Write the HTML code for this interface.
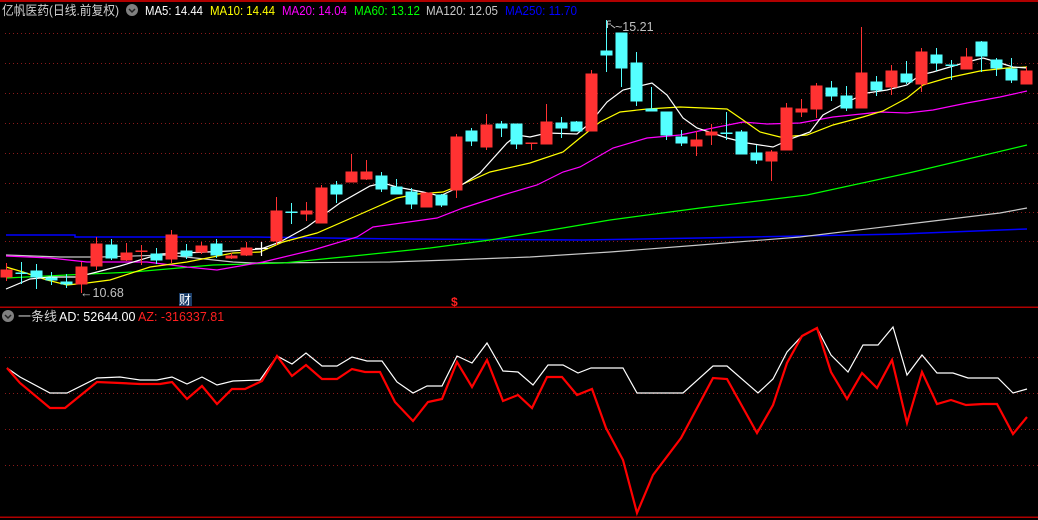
<!DOCTYPE html>
<html><head><meta charset="utf-8"><style>
html,body{margin:0;padding:0;background:#000;width:1038px;height:520px;overflow:hidden}
svg{display:block}
text{font-family:"Liberation Sans","Noto Sans CJK SC",sans-serif;font-size:12.5px}
</style></head><body>
<svg width="1038" height="520" viewBox="0 0 1038 520" xmlns="http://www.w3.org/2000/svg">
<rect width="1038" height="520" fill="#000"/>
<rect x="0" y="0" width="1038" height="2" fill="#b00000"/>
<g stroke="#8a1a1a" stroke-width="1" stroke-dasharray="1,3">
<line x1="5" y1="33.5" x2="1038" y2="33.5"/><line x1="5" y1="63.5" x2="1038" y2="63.5"/>
<line x1="5" y1="93.5" x2="1038" y2="93.5"/><line x1="5" y1="123.5" x2="1038" y2="123.5"/>
<line x1="5" y1="153.5" x2="1038" y2="153.5"/><line x1="5" y1="183.5" x2="1038" y2="183.5"/>
<line x1="5" y1="212.5" x2="1038" y2="212.5"/><line x1="5" y1="241.5" x2="1038" y2="241.5"/>
<line x1="5" y1="357.5" x2="1038" y2="357.5"/><line x1="5" y1="393.5" x2="1038" y2="393.5"/>
<line x1="5" y1="429.5" x2="1038" y2="429.5"/><line x1="5" y1="465.5" x2="1038" y2="465.5"/>
</g>
<rect x="0" y="306.5" width="1038" height="1.5" fill="#b00000"/>
<rect x="0" y="516.5" width="1038" height="1.5" fill="#b00000"/>

<g fill="none" stroke-width="1.2">
<polyline stroke="#0000ff" stroke-width="1.5" points="6,235 75,235 75,237 250,237 405,239 583,240 700,238 900,234 1027,229"/>
<polyline stroke="#c8c8c8" points="6,255 60,257 100,257 167,255 233,262 253,263 390,262 450,260 530,257 610,252 700,245 800,237 900,225 1000,213 1027,208"/>
<polyline stroke="#00ff00" points="6,278 67,275 133,272 213,265 283,263 363,255 430,248 490,240 563,228 610,220 700,208 807,195 913,172 1027,145"/>
<polyline stroke="#ff00ff" points="6,256 50,258 87,262 147,262 187,267 217,270 263,262 313,250 357,237 373,227 437,218 463,208 503,195 537,185 563,172 580,167 613,148 647,138 680,135 713,128 743,122 767,124 800,123 833,117 880,112 907,113 933,110 967,103 1000,97 1027,91"/>
<polyline stroke="#ffff00" points="6,267 23,272 47,280 67,285 87,283 110,280 150,267 187,262 233,253 260,252 283,242 317,233 363,213 397,198 417,194 443,192 463,184 490,172 530,163 563,152 580,138 600,122 620,112 647,109 680,107 727,109 743,120 760,132 780,137 807,135 833,125 863,117 883,111 907,98 923,85 947,78 980,71 1007,68 1027,67"/>
<polyline stroke="#ffffff" points="6,289 30,279 50,277 77,277 97,272 120,266 160,254 207,252 230,251 261,249 280,242 307,227 340,203 370,186 383,183 397,187 423,192 440,196 457,188 480,173 507,143 517,135 530,137 547,133 577,134 590,123 607,102 623,90 652,83 667,95 683,118 697,128 727,138 747,143 773,147 793,138 810,132 823,115 847,102 867,93 887,90 907,85 920,75 933,72 950,67 967,62 983,58 997,62 1013,67 1027,68"/>
</g>

<g stroke="#ff3232" fill="#ff3232" stroke-width="1">
<line x1="6.5" y1="263" x2="6.5" y2="281"/><rect x="1" y="270" width="11" height="7"/>
<line x1="81.5" y1="262" x2="81.5" y2="293"/><rect x="76" y="267" width="11" height="17"/>
<line x1="96.5" y1="237" x2="96.5" y2="270"/><rect x="91" y="244" width="11" height="22"/>
<line x1="126.5" y1="243" x2="126.5" y2="261"/><rect x="121" y="253" width="11" height="7"/>
<line x1="141.5" y1="245" x2="141.5" y2="265"/><rect x="136" y="251" width="11" height="0.5"/>
<line x1="171.5" y1="230" x2="171.5" y2="263"/><rect x="166" y="235" width="11" height="24"/>
<line x1="201.5" y1="242" x2="201.5" y2="254"/><rect x="196" y="246" width="11" height="6"/>
<line x1="231.5" y1="253" x2="231.5" y2="259"/><rect x="226" y="256" width="11" height="2"/>
<line x1="246.5" y1="242" x2="246.5" y2="256"/><rect x="241" y="248" width="11" height="7"/>
<line x1="276.5" y1="197" x2="276.5" y2="245"/><rect x="271" y="211" width="11" height="30"/>
<line x1="306.5" y1="202" x2="306.5" y2="221"/><rect x="301" y="211" width="11" height="3"/>
<line x1="321.5" y1="185" x2="321.5" y2="223"/><rect x="316" y="188" width="11" height="35"/>
<line x1="351.5" y1="154" x2="351.5" y2="182"/><rect x="346" y="172" width="11" height="10"/>
<line x1="366.5" y1="160" x2="366.5" y2="180"/><rect x="361" y="172" width="11" height="7"/>
<line x1="426.5" y1="192" x2="426.5" y2="207"/><rect x="421" y="193" width="11" height="14"/>
<line x1="456.5" y1="134" x2="456.5" y2="198"/><rect x="451" y="137" width="11" height="53"/>
<line x1="486.5" y1="114" x2="486.5" y2="150"/><rect x="481" y="125" width="11" height="22"/>
<line x1="531.5" y1="143" x2="531.5" y2="150"/><rect x="526" y="143" width="11" height="0.5"/>
<line x1="546.5" y1="104" x2="546.5" y2="144"/><rect x="541" y="122" width="11" height="22"/>
<line x1="591.5" y1="70" x2="591.5" y2="131"/><rect x="586" y="74" width="11" height="57"/>
<line x1="696.5" y1="131" x2="696.5" y2="156"/><rect x="691" y="140" width="11" height="6"/>
<line x1="711.5" y1="124" x2="711.5" y2="145"/><rect x="706" y="132" width="11" height="3"/>
<line x1="771.5" y1="150" x2="771.5" y2="181"/><rect x="766" y="152" width="11" height="9"/>
<line x1="786.5" y1="103" x2="786.5" y2="150"/><rect x="781" y="108" width="11" height="42"/>
<line x1="801.5" y1="99" x2="801.5" y2="117"/><rect x="796" y="109" width="11" height="3"/>
<line x1="816.5" y1="83" x2="816.5" y2="118"/><rect x="811" y="86" width="11" height="23"/>
<line x1="861.5" y1="27" x2="861.5" y2="108"/><rect x="856" y="73" width="11" height="35"/>
<line x1="891.5" y1="65" x2="891.5" y2="95"/><rect x="886" y="71" width="11" height="16"/>
<line x1="921.5" y1="48" x2="921.5" y2="92"/><rect x="916" y="52" width="11" height="32"/>
<line x1="966.5" y1="48" x2="966.5" y2="69"/><rect x="961" y="57" width="11" height="12"/>
<line x1="1026.5" y1="67" x2="1026.5" y2="84"/><rect x="1021" y="71" width="11" height="13"/>
</g>
<g stroke="#54ffff" fill="#54ffff" stroke-width="1">
<line x1="21.5" y1="262" x2="21.5" y2="284"/><rect x="16" y="273" width="11" height="0.5"/>
<line x1="36.5" y1="264" x2="36.5" y2="289"/><rect x="31" y="271" width="11" height="6"/>
<line x1="51.5" y1="272" x2="51.5" y2="285"/><rect x="46" y="278" width="11" height="2"/>
<line x1="66.5" y1="274" x2="66.5" y2="288"/><rect x="61" y="282" width="11" height="2"/>
<line x1="111.5" y1="239" x2="111.5" y2="260"/><rect x="106" y="245" width="11" height="13"/>
<line x1="156.5" y1="248" x2="156.5" y2="264"/><rect x="151" y="254" width="11" height="6"/>
<line x1="186.5" y1="244" x2="186.5" y2="259"/><rect x="181" y="251" width="11" height="5"/>
<line x1="216.5" y1="239" x2="216.5" y2="258"/><rect x="211" y="244" width="11" height="11"/>
<line x1="291.5" y1="203" x2="291.5" y2="224"/><rect x="286" y="212" width="11" height="0.5"/>
<line x1="336.5" y1="181" x2="336.5" y2="203"/><rect x="331" y="185" width="11" height="9"/>
<line x1="381.5" y1="172" x2="381.5" y2="192"/><rect x="376" y="176" width="11" height="13"/>
<line x1="396.5" y1="179" x2="396.5" y2="194"/><rect x="391" y="187" width="11" height="7"/>
<line x1="411.5" y1="188" x2="411.5" y2="209"/><rect x="406" y="192" width="11" height="12"/>
<line x1="441.5" y1="194" x2="441.5" y2="207"/><rect x="436" y="195" width="11" height="10"/>
<line x1="471.5" y1="128" x2="471.5" y2="146"/><rect x="466" y="131" width="11" height="10"/>
<line x1="501.5" y1="121" x2="501.5" y2="137"/><rect x="496" y="124" width="11" height="4"/>
<line x1="516.5" y1="124" x2="516.5" y2="149"/><rect x="511" y="124" width="11" height="20"/>
<line x1="561.5" y1="117" x2="561.5" y2="138"/><rect x="556" y="123" width="11" height="5"/>
<line x1="576.5" y1="121" x2="576.5" y2="131"/><rect x="571" y="122" width="11" height="9"/>
<line x1="606.5" y1="20" x2="606.5" y2="72"/><rect x="601" y="51" width="11" height="4"/>
<line x1="621.5" y1="33" x2="621.5" y2="87"/><rect x="616" y="33" width="11" height="35"/>
<line x1="636.5" y1="52" x2="636.5" y2="106"/><rect x="631" y="63" width="11" height="38"/>
<line x1="651.5" y1="87" x2="651.5" y2="111"/><rect x="646" y="109" width="11" height="2"/>
<line x1="666.5" y1="112" x2="666.5" y2="140"/><rect x="661" y="112" width="11" height="23"/>
<line x1="681.5" y1="130" x2="681.5" y2="146"/><rect x="676" y="137" width="11" height="6"/>
<line x1="726.5" y1="112" x2="726.5" y2="140"/><rect x="721" y="133" width="11" height="0.5"/>
<line x1="741.5" y1="130" x2="741.5" y2="154"/><rect x="736" y="132" width="11" height="22"/>
<line x1="756.5" y1="145" x2="756.5" y2="164"/><rect x="751" y="153" width="11" height="7"/>
<line x1="831.5" y1="81" x2="831.5" y2="101"/><rect x="826" y="88" width="11" height="8"/>
<line x1="846.5" y1="86" x2="846.5" y2="111"/><rect x="841" y="96" width="11" height="12"/>
<line x1="876.5" y1="76" x2="876.5" y2="96"/><rect x="871" y="82" width="11" height="8"/>
<line x1="906.5" y1="61" x2="906.5" y2="84"/><rect x="901" y="74" width="11" height="8"/>
<line x1="936.5" y1="48" x2="936.5" y2="71"/><rect x="931" y="55" width="11" height="8"/>
<line x1="951.5" y1="60" x2="951.5" y2="80"/><rect x="946" y="65" width="11" height="0.5"/>
<line x1="981.5" y1="41" x2="981.5" y2="72"/><rect x="976" y="42" width="11" height="14"/>
<line x1="996.5" y1="58" x2="996.5" y2="76"/><rect x="991" y="60" width="11" height="8"/>
<line x1="1011.5" y1="58" x2="1011.5" y2="83"/><rect x="1006" y="69" width="11" height="11"/>
</g>
<g stroke="#fff" stroke-width="1.2"><line x1="261.5" y1="242" x2="261.5" y2="256"/><line x1="255" y1="248.5" x2="268" y2="248.5"/></g>

<text x="80" y="297" fill="#c0c0c0">←10.68</text>
<path d="M607.5,21 L607.5,28 M607.5,21 L611,21 M607.5,24 L611,24 M611,25 L615,28" stroke="#c0c0c0" fill="none"/>
<text x="615" y="31" fill="#c0c0c0">~15.21</text>
<rect x="179" y="293" width="13" height="13" fill="#1c3f6a"/>
<text x="179" y="304" fill="#fff" style="font-size:12px">财</text>
<text x="451" y="306" fill="#ff2020" style="font-size:12px;font-weight:bold">$</text>

<text x="2" y="15" fill="#d0d0d0" style="font-size:13px" textLength="117" lengthAdjust="spacingAndGlyphs">亿帆医药(日线.前复权)</text>
<circle cx="132" cy="10" r="6" fill="#808080"/>
<path d="M129,9 L132,12 L135,9" stroke="#222" stroke-width="1.5" fill="none"/>
<text x="145" y="15" fill="#ffffff" textLength="58" lengthAdjust="spacingAndGlyphs">MA5: 14.44</text>
<text x="210" y="15" fill="#ffff00" textLength="65" lengthAdjust="spacingAndGlyphs">MA10: 14.44</text>
<text x="282" y="15" fill="#ff00ff" textLength="65" lengthAdjust="spacingAndGlyphs">MA20: 14.04</text>
<text x="354" y="15" fill="#00ff00" textLength="66" lengthAdjust="spacingAndGlyphs">MA60: 13.12</text>
<text x="426" y="15" fill="#c8c8c8" textLength="72" lengthAdjust="spacingAndGlyphs">MA120: 12.05</text>
<text x="505" y="15" fill="#0000ff" textLength="72" lengthAdjust="spacingAndGlyphs">MA250: 11.70</text>

<circle cx="8" cy="316" r="6" fill="#808080"/>
<path d="M5,315 L8,318 L11,315" stroke="#222" stroke-width="1.5" fill="none"/>
<text x="18" y="321" fill="#d0d0d0" style="font-size:13px">一条线</text>
<text x="59" y="321" fill="#ffffff">AD: 52644.00</text>
<text x="138" y="321" fill="#ff2020">AZ: -316337.81</text>

<polyline fill="none" stroke="#ffffff" stroke-width="1.2" points="7,368 20,377 50,393 67,393 97,378 120,377 140,380 157,380 172,377 187,384 202,377 217,385 233,381 260,380 277,356 292,364 306,353 322,366 337,366 352,357 367,361 382,361 397,382 413,393 427,386 442,386 457,356 472,363 487,343 503,371 518,372 533,385 548,365 563,365 578,373 591,368 623,368 637,393 683,393 713,366 727,366 758,393 773,379 787,352 801,337 817,328 831,355 848,372 863,345 878,345 893,327 907,375 922,355 937,373 953,373 968,378 998,378 1013,393 1027,389"/>
<polyline fill="none" stroke="#ff0000" stroke-width="2.2" points="7,368 20,383 50,408 65,408 97,382 120,383 140,384 160,384 172,382 187,399 202,386 217,404 232,389 245,389 262,381 277,356 292,376 306,365 322,379 337,379 352,369 365,372 380,372 395,402 413,421 428,402 442,399 457,362 472,387 487,360 503,401 518,395 532,408 547,377 562,377 577,395 592,389 606,428 623,460 637,513 653,475 681,438 713,378 727,379 757,433 773,405 787,363 802,336 817,328 831,372 847,399 862,373 877,388 892,360 907,423 922,372 937,404 951,400 966,405 983,404 997,404 1013,434 1027,417"/>
</svg>
</body></html>
